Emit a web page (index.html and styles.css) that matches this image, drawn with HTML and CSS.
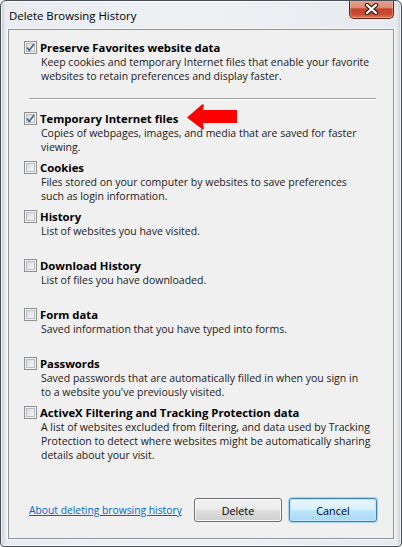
FILE: index.html
```html
<!DOCTYPE html>
<html lang="en">
<head>
  <meta charset="UTF-8">
  <title>Delete Browsing History</title>
  <link rel="stylesheet" href="styles.css">
</head>
<body>
  <div class="window">
    <div class="titlebar">
      <span class="title">Delete Browsing History</span>
      <button class="close-button" aria-label="Close">
        <svg width="15" height="12" viewBox="0 0 15 12">
          <path d="M3 2 L12 10 M12 2 L3 10" stroke="#3d2019" stroke-width="4.4" stroke-linecap="round"/>
          <path d="M3 2 L12 10 M12 2 L3 10" stroke="#fff" stroke-width="2.2" stroke-linecap="round"/>
        </svg>
      </button>
    </div>

    <div class="client">
      <div class="option first">
        <div class="option-head">
          <span class="check checked">
            <svg width="9" height="9" viewBox="0 0 9 9"><path d="M1 4.5 L3.3 7.5 L8 1" fill="none" stroke="#4b5f8c" stroke-width="1.6"/></svg>
          </span>
          <span class="option-title">Preserve Favorites website data</span>
        </div>
        <div class="option-desc">Keep cookies and temporary Internet files that enable your favorite<br>websites to retain preferences and display faster.</div>
      </div>

      <div class="separator"></div>

      <div class="options">
        <div class="option">
          <div class="option-head">
            <span class="check checked">
              <svg width="9" height="9" viewBox="0 0 9 9"><path d="M1 4.5 L3.3 7.5 L8 1" fill="none" stroke="#4b5f8c" stroke-width="1.6"/></svg>
            </span>
            <span class="option-title">Temporary Internet files</span>
          </div>
          <div class="option-desc">Copies of webpages, images, and media that are saved for faster<br>viewing.</div>
          <svg class="arrow" width="50" height="25" viewBox="0 0 50 25">
            <polygon points="0,13.5 15,0.5 17,0.5 16,6 50,6 50,19 16,19 17,25 15,25" fill="#f00"/>
          </svg>
        </div>

        <div class="option">
          <div class="option-head">
            <span class="check"></span>
            <span class="option-title">Cookies</span>
          </div>
          <div class="option-desc">Files stored on your computer by websites to save preferences<br>such as login information.</div>
        </div>

        <div class="option">
          <div class="option-head">
            <span class="check"></span>
            <span class="option-title">History</span>
          </div>
          <div class="option-desc">List of websites you have visited.</div>
        </div>

        <div class="option">
          <div class="option-head">
            <span class="check"></span>
            <span class="option-title">Download History</span>
          </div>
          <div class="option-desc">List of files you have downloaded.</div>
        </div>

        <div class="option">
          <div class="option-head">
            <span class="check"></span>
            <span class="option-title">Form data</span>
          </div>
          <div class="option-desc">Saved information that you have typed into forms.</div>
        </div>

        <div class="option">
          <div class="option-head">
            <span class="check"></span>
            <span class="option-title">Passwords</span>
          </div>
          <div class="option-desc">Saved passwords that are automatically filled in when you sign in<br>to a website you've previously visited.</div>
        </div>

        <div class="option">
          <div class="option-head">
            <span class="check"></span>
            <span class="option-title">ActiveX Filtering and Tracking Protection data</span>
          </div>
          <div class="option-desc">A list of websites excluded from filtering, and data used by Tracking<br>Protection to detect where websites might be automatically sharing<br>details about your visit.</div>
        </div>
      </div>

      <div class="footer">
        <a class="help-link" href="#">About deleting browsing history</a>
        <div class="buttons">
          <button class="button">Delete</button>
          <button class="button default">Cancel</button>
        </div>
      </div>
    </div>
  </div>
</body>
</html>
```

FILE: styles.css
```css
body {
  margin: 0;
  padding: 0;
  background-color: #ffffff;
  font-family: "Open Sans", "Noto Sans", sans-serif;
  font-size: 10.5px;
  color: #000;
}
.window {
  width: 402px;
  height: 547px;
  box-sizing: border-box;
  border: 1px solid #4a4f55;
  border-radius: 6px 6px 4px 4px;
  background: linear-gradient(90deg, #c9ced3 0, #e9edf1 5px, #eef1f4 50%, #e6eaee 396px, #c4c9ce 100%);
  box-shadow: inset 0 0 0 1px rgba(255, 255, 255, 0.7);
  display: flex;
  flex-direction: column;
  overflow: hidden;
}
.titlebar {
  height: 28px;
  display: flex;
  justify-content: space-between;
  align-items: flex-start;
  padding: 0 7px 0 8px;
}
.title {
  font-size: 11.4px;
  line-height: 14px;
  margin-top: 8px;
}
.close-button {
  width: 45px;
  height: 19px;
  margin-top: -1px;
  padding: 0;
  border: 1px solid #5e2418;
  border-top: none;
  border-radius: 0 0 5px 5px;
  background: linear-gradient(#e8a693 0%, #dc8a74 42%, #c3442b 50%, #c84a2f 78%, #e0785a 100%);
  box-shadow: inset 0 0 0 1px rgba(255, 220, 200, 0.35);
  display: flex;
  align-items: center;
  justify-content: center;
}
.client {
  flex: 1;
  margin: 0 7px 7px 7px;
  border: 1px solid #8c949c;
  background-color: #f0f0f0;
  box-shadow: 0 0 0 1px rgba(255, 255, 255, 0.6);
  display: flex;
  flex-direction: column;
  padding: 10px 16px 0 15px;
}
.option {
  position: relative;
  height: 49px;
}
.option.first {
  height: auto;
}
.option-head {
  height: 15px;
  display: flex;
  align-items: center;
  gap: 3px;
}
.check {
  width: 13px;
  height: 13px;
  box-sizing: border-box;
  border: 1px solid #8e8f8f;
  background: linear-gradient(135deg, #cfd3d8 0%, #eceef0 60%, #f8f8f8 100%);
  box-shadow: inset 0 0 0 1px #f4f4f4, inset 0 0 0 2px #b9bdc2;
  display: flex;
  align-items: center;
  justify-content: center;
}
.option-title {
  font-size: 11.3px;
  font-weight: bold;
  line-height: 15px;
  color: #000;
}
.option-desc {
  padding-left: 17px;
  line-height: 14px;
  white-space: nowrap;
  color: #1a1a1a;
}
.arrow {
  position: absolute;
  left: 163px;
  top: -7px;
}
.separator {
  margin: 15px 1px 11px 5px;
  border-top: 1px solid #a0a0a0;
  border-bottom: 1px solid #ffffff;
}
.footer {
  margin-top: auto;
  margin-bottom: 16px;
  padding-left: 5px;
  display: flex;
  align-items: center;
  justify-content: space-between;
}
.help-link {
  color: #0066cc;
  font-size: 10.3px;
  text-decoration: underline;
}
.buttons {
  display: flex;
  gap: 7px;
}
.button {
  width: 88px;
  height: 24px;
  padding: 0;
  font-family: inherit;
  font-size: 10.8px;
  color: #000;
  border: 1px solid #707070;
  border-radius: 3px;
  background: linear-gradient(#f2f2f2 0%, #ebebeb 48%, #dddddd 52%, #cfcfcf 100%);
  box-shadow: inset 0 0 0 1px rgba(255, 255, 255, 0.8);
}
.button.default {
  border-color: #3c7fb1;
  background: linear-gradient(#eaf6fd 0%, #d9f0fc 48%, #bee6fd 52%, #a7d9f5 100%);
  box-shadow: inset 0 0 0 1px #c4e5f6, 0 0 1px 1px #a6d3ef;
}
```
